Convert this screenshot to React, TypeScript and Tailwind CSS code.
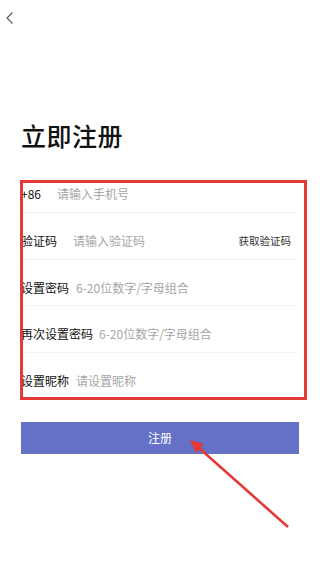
import React from "react";

const rows: { label: string; labelW: string; placeholder: string; extra?: string; border: boolean }[] = [
  { label: "+86", labelW: "w-[36px]", placeholder: "请输入手机号", border: true },
  { label: "验证码", labelW: "w-[52px]", placeholder: "请输入验证码", extra: "获取验证码", border: true },
  { label: "设置密码", labelW: "w-[55px]", placeholder: "6-20位数字/字母组合", border: true },
  { label: "再次设置密码", labelW: "w-[78px]", placeholder: "6-20位数字/字母组合", border: true },
  { label: "设置昵称", labelW: "w-[55px]", placeholder: "请设置昵称", border: false },
];

export default function App() {
  return (
    <div
      className="relative w-[320px] h-[568px] bg-white overflow-hidden"
      style={{ fontFamily: '"Noto Sans CJK SC", "Noto Sans", sans-serif' }}
    >
      <div className="h-[35px] pl-[5px] pt-[11px]">
        <svg width="10" height="14" viewBox="0 0 10 14" fill="none">
          <path d="M7.5 1.5 L2 7 L7.5 12.5" stroke="#555" strokeWidth="1.1" />
        </svg>
      </div>
      <div className="px-[21px]">
        <h1 className="mt-[85px] text-[25px] leading-[30px] font-medium text-[#111] tracking-[0.5px]">
          立即注册
        </h1>
        <div className="mt-[16px]">
          {rows.map((r) => (
            <div
              key={r.label}
              className={`flex items-start h-[46.75px] pt-[20px] ${r.border ? "border-b border-[#f3f3f3]" : ""}`}
            >
              <span className={`${r.labelW} shrink-0 text-[12px] leading-[16px] text-[#111]`}>{r.label}</span>
              <input
                className="flex-1 min-w-0 bg-transparent outline-none text-[12px] leading-[16px] text-[#111] placeholder:text-[#a6a6a6]"
                placeholder={r.placeholder}
              />
              {r.extra && (
                <span className="shrink-0 mr-[8px] text-[10.5px] leading-[16px] text-[#333]">{r.extra}</span>
              )}
            </div>
          ))}
        </div>
        <button className="mt-[22px] w-full h-[32px] bg-[#6471c6] text-white text-[12px] flex items-center justify-center">
          注册
        </button>
      </div>

      {/* annotation overlays */}
      <div className="absolute left-[20px] top-[180px] w-[287px] h-[220px] border-[3px] border-[#e53935] pointer-events-none" />
      <svg className="absolute left-0 top-0 pointer-events-none" width="320" height="568" viewBox="0 0 320 568">
        <line x1="288" y1="527" x2="199" y2="448" stroke="#e53935" strokeWidth="2.6" />
        <polygon points="190,440 204,444 196,453" fill="#e53935" />
      </svg>
    </div>
  );
}
